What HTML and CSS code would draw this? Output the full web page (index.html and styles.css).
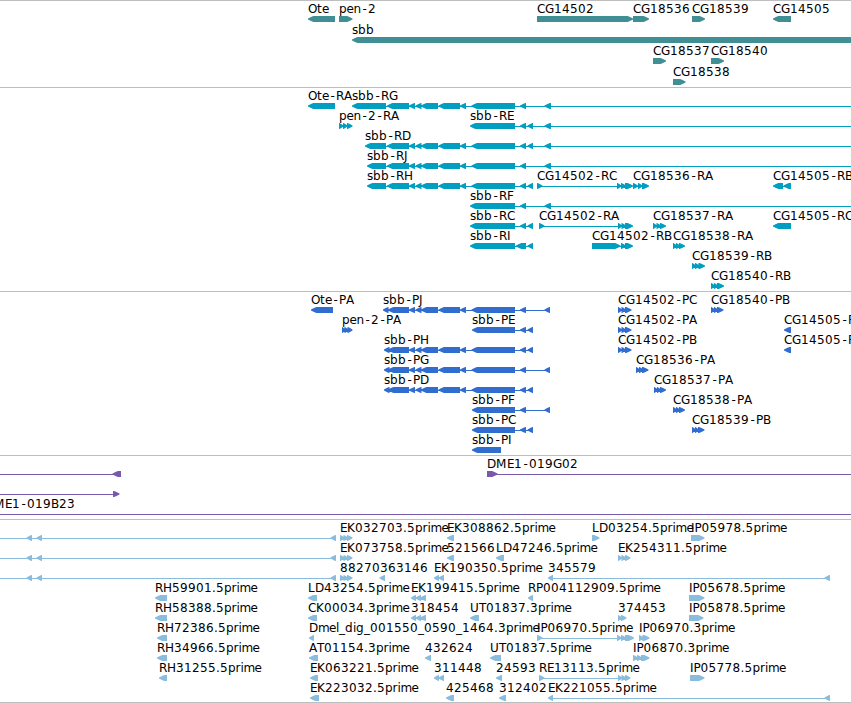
FILE: index.html
```
<!DOCTYPE html>
<html lang="en">
  <head>
    <meta charset="utf-8" />
    <title>Genome tracks</title>
    <link rel="stylesheet" href="styles.css" />
  </head>
  <body>
    <main class="browser">
      <section class="track genes"><svg id="genes"></svg></section>
      <section class="track transcripts"><svg id="transcripts"></svg></section>
      <section class="track proteins"><svg id="proteins"></svg></section>
      <section class="track clones"><svg id="clones"></svg></section>
      <section class="track ests"><svg id="ests"></svg></section>
    </main>
    <script src="tracks.js"></script>
  </body>
</html>
```
FILE: styles.css
```
body {
  margin: 0;
  background-color: #fff;
}

.browser {
  display: flex;
  flex-direction: column;
  width: 100%;
  overflow: hidden;
  border-bottom: 1px solid #bebebe;
}

.track {
  box-sizing: border-box;
  border-top: 1px solid #bebebe;
}

.track svg {
  display: block;
  width: 100%;
  height: 100%;
}

.track text {
  font-family: "DejaVu Sans", sans-serif;
  font-size: 12px;
  font-kerning: none;
  fill: #000;
}

.genes {
  height: 87px;
  color: #3f8f94;
}

.transcripts {
  height: 204px;
  color: #009ec0;
}

.proteins {
  height: 164px;
  color: #316dce;
}

.clones {
  height: 64px;
  color: #775aaa;
}

.ests {
  height: 183px;
  color: #8abddd;
}

.feature {
  fill: currentColor;
}
```
FILE: tracks.js
```
const SVG = "http://www.w3.org/2000/svg";

// advance of every letter in a label, digits and the rest are 8
const widths = {
  G: 9, D: 9, H: 9, O: 9, U: 9, M: 11, E: 7, F: 7, P: 7, L: 7, T: 7, J: 4, I: 3.5,
  s: 6, e: 7, r: 5, i: 3, l: 3, t: 5, m: 11, p: 7.5, n: 7.5, ".": 4, "-": 7, _: 6,
};

// exons shared by the sbb transcripts
const mid = [[387, 409], [409, 415], [415.5, 421.5], [421, 438], [438.5, 460], [460, 466], [471.5, 515]];
const a = [520, 526];
const b = [527.5, 533];
const c = [544.5, 551];
const off = [900, 906];
const left = [[-20, -14], [26.5, 32], [36.5, 42], [330.5, 336]];

// row, label, label x, direction, exons
const genes = [
  [0, "Ote", 308, "<", [[308, 335]]],
  [0, "pen-2", 339, ">", [[339, 352.5]]],
  [0, "CG14502", 537, ">", [[537, 633]]],
  [0, "CG18536", 633, ">", [[633, 649]]],
  [0, "CG18539", 692, ">", [[692, 705]]],
  [0, "CG14505", 773, "<", [[773, 791]]],
  [1, "sbb", 352, "<", [[352, 900]]],
  [2, "CG18537", 653, ">", [[653, 666]]],
  [2, "CG18540", 711, ">", [[711, 724]]],
  [3, "CG18538", 673, ">", [[673, 685.5]]],
];

const transcripts = [
  [0, "Ote-RA", 308, "<", [[308, 335]]],
  [0, "sbb-RG", 352, "<", [[352, 386], ...mid, a, c, off]],
  [1, "pen-2-RA", 339, ">", [[339, 343.5], [343, 347.5], [347, 352.5]]],
  [1, "sbb-RE", 470, "<", [[470, 515], a, b, c, off]],
  [2, "sbb-RD", 365, "<", [[365, 386], ...mid, a, b, c, off]],
  [3, "sbb-RJ", 367, "<", [[367, 386], ...mid, a, c, off]],
  [4, "sbb-RH", 367, "<", [[367, 386], ...mid, a, b]],
  [4, "CG14502-RC", 537, ">", [[537, 542.5], [617, 621.5], [621, 626], [625, 633]]],
  [4, "CG18536-RA", 633, ">", [[633, 638], [638, 642.5], [642, 649]]],
  [4, "CG14505-RB", 773, "<", [[773, 783], [783.5, 791]]],
  [5, "sbb-RF", 470, "<", [[470, 515], a, c, off]],
  [6, "sbb-RC", 470, "<", [[470, 515], a, b]],
  [6, "CG14502-RA", 539, ">", [[539, 544.5], [618, 622], [621.5, 626], [625, 633]]],
  [6, "CG18537-RA", 653, ">", [[653, 657], [656.5, 661], [660, 666]]],
  [6, "CG14505-RC", 773, "<", [[773, 791]]],
  [7, "sbb-RI", 470, "<", [[470, 515], [516, 526], b]],
  [7, "CG14502-RB", 592, ">", [[592, 620.5], [621, 626], [625, 633]]],
  [7, "CG18538-RA", 673, ">", [[673, 677], [676, 680], [679, 685]]],
  [8, "CG18539-RB", 692, ">", [[692, 696], [695, 699.5], [698.5, 705]]],
  [9, "CG18540-RB", 711, ">", [[711, 715], [714, 718], [717, 724]]],
];

const proteins = [
  [0, "Ote-PA", 311, "<", [[311, 333]]],
  [0, "sbb-PJ", 383, "<", [[383, 388.5], [388, 409], ...mid.slice(1), a, [544.5, 550]]],
  [0, "CG14502-PC", 618, ">", [[618, 622], [621.5, 626], [625, 631.5]]],
  [0, "CG18540-PB", 711, ">", [[711, 715], [714, 718], [717, 723.5]]],
  [1, "pen-2-PA", 342, ">", [[342, 345.5], [344.5, 348.5], [347.5, 352.5]]],
  [1, "sbb-PE", 472, "<", [[472, 515], a, b]],
  [1, "CG14502-PA", 618, ">", [[618, 622], [621.5, 626], [625, 631.5]]],
  [1, "CG14505-PB", 784, "<", [[784, 791]]],
  [2, "sbb-PH", 384, "<", [[384, 389.5], [388, 409], ...mid.slice(1), a, b]],
  [2, "CG14502-PB", 618, ">", [[618, 622], [621.5, 626], [625, 631.5]]],
  [2, "CG14505-PC", 784, "<", [[784, 791]]],
  [3, "sbb-PG", 384, "<", [[384, 389.5], [388, 409], ...mid.slice(1), a, [544.5, 550]]],
  [3, "CG18536-PA", 636, ">", [[636, 640], [639, 643.5], [642, 648.5]]],
  [4, "sbb-PD", 384, "<", [[384, 389.5], [388, 409], ...mid.slice(1), a, b]],
  [4, "CG18537-PA", 654, ">", [[654, 658], [657, 661], [660, 666]]],
  [5, "sbb-PF", 472, "<", [[472, 515], a, [544.5, 550]]],
  [5, "CG18538-PA", 673, ">", [[673, 677], [676, 680], [679, 685]]],
  [6, "sbb-PC", 472, "<", [[472, 515], a, b]],
  [6, "CG18539-PB", 692, ">", [[692, 696], [695, 699], [698, 704.5]]],
  [7, "sbb-PI", 472, "<", [[472, 501]]],
];

const clones = [
  [0, "", 0, "<", [[-20, -14], [112.5, 121]]],
  [0, "DME1-019G02", 487, ">", [[487, 497.5], off]],
  [1, "", 0, ">", [[-20, -14], [113, 119.5]]],
  [2, "DME1-019B23", -15, ">", [[-20, -14], off]],
];

const ests = [
  [0, "", 0, "<", left],
  [0, "EK032703.5prime", 340, ">", [[340, 344.5], [343.5, 348], [347, 352.5]]],
  [0, "EK308862.5prime", 447, "<", [[447, 454]]],
  [0, "LD03254.5prime", 592, ">", [[592, 599.5]]],
  [0, "IP05978.5prime", 691, ">", [[691, 704.5]]],
  [1, "", 0, "<", left],
  [1, "EK073758.5prime", 340, ">", [[340, 344.5], [343.5, 348], [347, 352.5]]],
  [1, "521566", 447, "<", [[447, 454]]],
  [1, "LD47246.5prime", 496, "<", [[496, 504]]],
  [1, "EK254311.5prime", 618, ">", [[618, 622], [621.5, 626], [625, 630.5]]],
  [2, "", 0, "<", left],
  [2, "88270", 340, ">", [[340, 344.5], [343.5, 348], [347, 352.5]]],
  [2, "363146", 380, "<", [[379.5, 385]]],
  [2, "EK190350.5prime", 434, "<", [[434, 439], [438.5, 444]]],
  [2, "345579", 548, "<", [[548, 553], [824.5, 830]]],
  [3, "RH59901.5prime", 155, "<", [[155, 167]]],
  [3, "LD43254.5prime", 308, "<", [[308, 317]]],
  [3, "EK199415.5prime", 411, "<", [[411, 416], [415.5, 421], [420, 426]]],
  [3, "RP004112909.5prime", 528, "<", [[528, 533]]],
  [3, "IP05678.5prime", 689, ">", [[689, 704.5]]],
  [4, "RH58388.5prime", 155, "<", [[155, 167]]],
  [4, "CK00034.3prime", 308, "<", [[308, 317]]],
  [4, "318454", 411, "<", [[411, 416], [415.5, 421], [420, 426]]],
  [4, "UT01837.3prime", 470, "<", [[470, 479]]],
  [4, "374453", 618, ">", [[618, 622], [621, 626.5]]],
  [4, "IP05878.5prime", 689, ">", [[689, 703.5]]],
  [5, "RH72386.5prime", 157, "<", [[157, 167]]],
  [5, "Dmel_dig_001550_0590_1464.3prime", 309, "<", [[309, 314]]],
  [5, "IP06970.5prime", 537, ">", [[537, 542.5], [617, 621.5], [621, 626], [625, 634]]],
  [5, "IP06970.3prime", 639, ">", [[639, 643.5], [642.5, 649.5]]],
  [6, "RH34966.5prime", 157, "<", [[157, 167]]],
  [6, "AT01154.3prime", 309, "<", [[309, 318]]],
  [6, "432624", 425, "<", [[425, 431]]],
  [6, "UT01837.5prime", 490, "<", [[490, 501]]],
  [6, "IP06870.3prime", 633, ">", [[633, 638], [637, 642], [641, 649.5]]],
  [7, "RH31255.5prime", 159, "<", [[159, 167]]],
  [7, "EK063221.5prime", 310, "<", [[310, 318]]],
  [7, "311448", 434, "<", [[434, 439], [438.5, 444]]],
  [7, "24593", 496, "<", [[496, 502]]],
  [7, "RE13113.5prime", 539, ">", [[539, 544.5], [618, 622], [621.5, 626], [625, 630.5]]],
  [7, "IP05778.5prime", 690, ">", [[690, 704.5]]],
  [8, "EK223032.5prime", 310, "<", [[310, 319]]],
  [8, "425468", 446, "<", [[446, 454]]],
  [8, "312402", 499, "<", [[499, 506]]],
  [8, "EK221055.5prime", 548, "<", [[548, 553], [824.5, 830]]],
];

function add(svg, name, attrs) {
  const el = document.createElementNS(SVG, name);
  for (const key in attrs) el.setAttribute(key, attrs[key]);
  svg.appendChild(el);
  return el;
}

function arrow(dir, x1, x2, y) {
  const head = Math.min(6, x2 - x1);
  const tip = dir === "<" ? x1 : x2;
  const tail = dir === "<" ? x2 : x1;
  const s = dir === "<" ? 1 : -1;
  const half = tip + (s * head) / 2;
  const full = tip + s * head * 0.9;
  return `M${tip} ${y + 2.5}L${half} ${y + 1}L${full} ${y}H${tail}V${y + 6}H${full}L${half} ${y + 5}L${tip} ${y + 3.5}Z`;
}

function drawTrack(id, features, pitch) {
  const svg = document.getElementById(id);
  for (const [row, label, labelX, dir, exons] of features) {
    const y = 15 + row * pitch;
    const start = exons[0][0];
    const end = exons[exons.length - 1][1];

    // intron line
    if (exons.length > 1) {
      add(svg, "rect", { class: "feature", x: start + 2, y: y + 3, width: end - start - 4, height: 1 });
    }
    const d = exons.map(([x1, x2]) => arrow(dir, x1, x2, y)).join("");
    add(svg, "path", { class: "feature", d });

    if (label) {
      let x = labelX;
      const xs = [...label].map((ch) => {
        const at = ch === "-" ? x + 1.5 : x;
        x += widths[ch] || 8;
        return at;
      });
      add(svg, "text", { x: xs.join(" "), y: y - 3 }).textContent = label;
    }
  }
}

drawTrack("genes", genes, 21);
drawTrack("transcripts", transcripts, 20);
drawTrack("proteins", proteins, 20);
drawTrack("clones", clones, 20);
drawTrack("ests", ests, 20);
```
